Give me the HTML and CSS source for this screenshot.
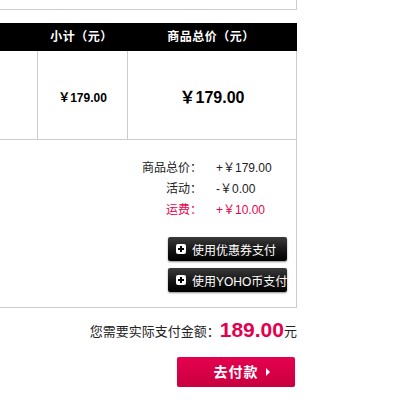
FILE: index.html
```html
<!DOCTYPE html>
<html lang="zh-CN">
<head>
	<meta charset="UTF-8">
	<title>购物车结算</title>
	<link rel="stylesheet" href="styles.css">
</head>
<body>
	<section class="wrap">
		<div class="top-box"></div>

		<div class="cart-table">
			<div class="cart-head">
				<span></span>
				<span>小计（元）</span>
				<span>商品总价（元）</span>
			</div>
			<div class="cart-row">
				<div class="cell"></div>
				<div class="cell sub">￥179.00</div>
				<div class="cell total">￥179.00</div>
			</div>
		</div>

		<div class="summary">
			<dl class="price-list">
				<dt>商品总价：</dt><dd>+￥179.00</dd>
				<dt>活动：</dt><dd>-￥0.00</dd>
				<dt class="red">运费：</dt><dd class="red">+￥10.00</dd>
			</dl>
			<div class="btns">
				<a href="javascript:;" class="dark-btn"><i class="plus"></i>使用优惠券支付</a>
				<a href="javascript:;" class="dark-btn"><i class="plus"></i>使用YOHO币支付</a>
			</div>
		</div>

		<p class="pay-total">您需要实际支付金额：<em>189.00</em>元</p>
		<div class="pay-line">
			<a href="javascript:;" class="pay-btn">去付款<i class="arrow"></i></a>
		</div>
	</section>
</body>
</html>
```

FILE: styles.css
```css
body{
	margin: 0;
	font-family: "Liberation Sans", "Noto Sans CJK SC", sans-serif;
	font-size: 12px;
	color: #222;
}
.wrap{
	width: 297px;
}
.top-box{
	height: 10px;
	box-sizing: border-box;
	border-right: 1px solid #ccc;
	border-bottom: 1px solid #ccc;
}
.cart-table{
	margin-top: 13px;
}
.cart-head,
.cart-row{
	display: grid;
	grid-template-columns: 38px 90px 169px;
}
.cart-head{
	height: 28px;
	line-height: 28px;
	background: #000;
	color: #fff;
	font-weight: bold;
	text-align: center;
}
.cart-head span:nth-child(2),
.cart-head span:nth-child(3){
	padding-right: 3px;
	letter-spacing: .5px;
}
.cart-row{
	height: 89px;
	box-sizing: border-box;
	border-bottom: 1px solid #ccc;
}
.cell{
	border-right: 1px solid #ccc;
	display: flex;
	align-items: center;
	justify-content: center;
	color: #000;
	font-weight: bold;
}
.cell.sub{
	padding-top: 2px;
}
.cell.total{
	font-size: 16px;
	padding-top: 2px;
}
.summary{
	height: 168px;
	box-sizing: border-box;
	padding-top: 18px;
	border-right: 1px solid #ccc;
	border-bottom: 1px solid #ccc;
}
.price-list{
	margin: 0 0 0 122px;
	display: grid;
	grid-template-columns: 80px 80px;
	column-gap: 14px;
	line-height: 21px;
}
.price-list dt{
	text-align: right;
}
.price-list dd{
	margin: 0;
}
.red{
	color: #e8044f;
}
.btns{
	margin: 16px 0 0 168px;
	display: flex;
	flex-direction: column;
	gap: 7px;
}
.dark-btn{
	width: 119px;
	height: 24px;
	box-sizing: border-box;
	padding-left: 8px;
	display: flex;
	align-items: center;
	gap: 6px;
	overflow: hidden;
	white-space: nowrap;
	color: #fff;
	text-decoration: none;
	background: linear-gradient(#3a3a3a, #111 60%, #000);
	border-radius: 2px;
	box-shadow: 0 1px 2px rgba(0,0,0,.45);
}
.plus{
	flex: none;
	width: 10px;
	height: 10px;
	background: #fff;
	border-radius: 2px;
	position: relative;
}
.plus:before,
.plus:after{
	content: "";
	position: absolute;
	background: #000;
}
.plus:before{
	left: 2px;
	top: 4px;
	width: 6px;
	height: 2px;
}
.plus:after{
	left: 4px;
	top: 2px;
	width: 2px;
	height: 6px;
}
.pay-total{
	margin: 10px 0 0;
	line-height: 24px;
	text-align: right;
	font-size: 13px;
	color: #222;
}
.pay-total em{
	font-style: normal;
	font-weight: bold;
	font-size: 21px;
	color: #e2004f;
	vertical-align: -1px;
}
.pay-line{
	margin-top: 13px;
	display: flex;
	justify-content: flex-end;
	padding-right: 2px;
}
.pay-btn{
	width: 118px;
	height: 30px;
	line-height: 30px;
	position: relative;
	text-align: center;
	color: #fff;
	font-size: 14px;
	font-weight: bold;
	letter-spacing: 1px;
	text-decoration: none;
	background: linear-gradient(#e5004f, #c9003f);
	border-radius: 2px;
	box-shadow: 0 1px 1px rgba(0,0,0,.2);
}
.arrow{
	position: absolute;
	right: 25px;
	top: 11px;
	width: 0;
	height: 0;
	border-left: 4px solid #fff;
	border-top: 4px solid transparent;
	border-bottom: 4px solid transparent;
}
```
